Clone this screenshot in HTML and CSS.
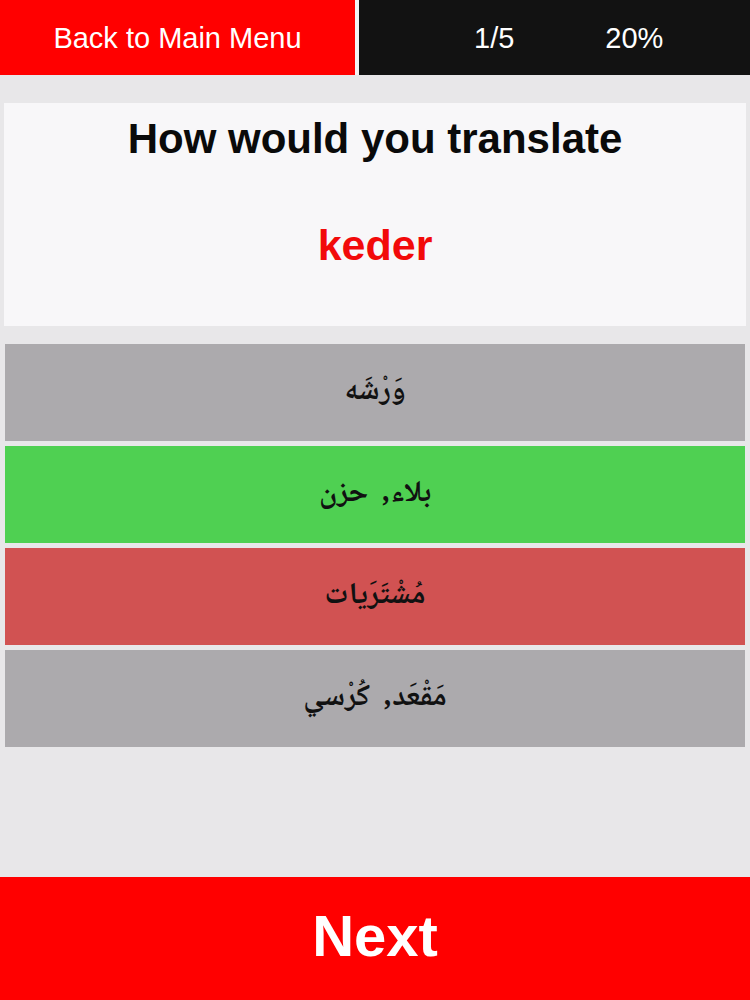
FILE: index.html
```html
<!DOCTYPE html>
<html lang="en">
<head>
<meta charset="utf-8">
<title>Quiz</title>
<link rel="stylesheet" href="styles.css">
</head>
<body>
<div class="app">
  <header class="topbar">
    <div class="back">Back to Main Menu</div>
    <div class="status">
      <span class="count">1/5</span>
      <span class="percent">20%</span>
    </div>
  </header>
  <main class="content">
    <section class="question">
      <div class="prompt">How would you translate</div>
      <div class="word">keder</div>
    </section>
    <div class="options">
      <div class="option neutral" dir="rtl" lang="ar">وَرْشَه</div>
      <div class="option correct" dir="rtl" lang="ar">بلاء,  حزن</div>
      <div class="option wrong" dir="rtl" lang="ar">مُشْتَرَيات</div>
      <div class="option neutral" dir="rtl" lang="ar">مَقْعَد,  كُرْسي</div>
    </div>
  </main>
  <footer class="next">Next</footer>
</div>
</body>
</html>
```
FILE: styles.css
```css
html, body {
  margin: 0;
  padding: 0;
}
body {
  background: #e8e7e9;
  font-family: "Liberation Sans", Arial, sans-serif;
}
.app {
  width: 750px;
  height: 1000px;
  display: flex;
  flex-direction: column;
  overflow: hidden;
}
.topbar {
  height: 75px;
  display: flex;
  background: #f4f3f5;
  gap: 4px;
  flex: none;
}
.back {
  width: 355px;
  background: #ff0000;
  color: #fff;
  font-size: 29px;
  display: flex;
  align-items: center;
  justify-content: center;
  padding-top: 2px;
  box-sizing: border-box;
}
.status {
  flex: 1;
  background: #121212;
  color: #fff;
  font-size: 29px;
  display: flex;
  align-items: center;
  padding-left: 115px;
  padding-top: 2px;
  gap: 91px;
}
.content {
  flex: 1;
  padding: 28px 5px 0 5px;
}
.question {
  background: #f8f7f9;
  margin: 0 -1px;
  padding: 12px 0 57px;
  text-align: center;
}
.prompt {
  font-size: 42px;
  font-weight: bold;
  line-height: 48px;
  color: #0a0a0a;
}
.word {
  font-size: 43px;
  font-weight: bold;
  line-height: 48px;
  margin-top: 58px;
  color: #f20a0a;
}
.options {
  margin-top: 18px;
  display: flex;
  flex-direction: column;
  gap: 5px;
}
.option {
  height: 97px;
  display: flex;
  align-items: center;
  justify-content: center;
  font-family: "Noto Naskh Arabic", "Noto Sans Arabic", "DejaVu Sans", sans-serif;
  font-weight: bold;
  font-size: 30px;
  color: #111;
  white-space: pre;
}
.neutral { background: #acaaad; }
.correct { background: #4fd052; }
.wrong { background: #d15252; }
.next {
  flex: none;
  height: 123px;
  background: #ff0000;
  color: #fff;
  font-size: 58px;
  font-weight: bold;
  display: flex;
  align-items: center;
  justify-content: center;
  padding-bottom: 6px;
  box-sizing: border-box;
}
```
